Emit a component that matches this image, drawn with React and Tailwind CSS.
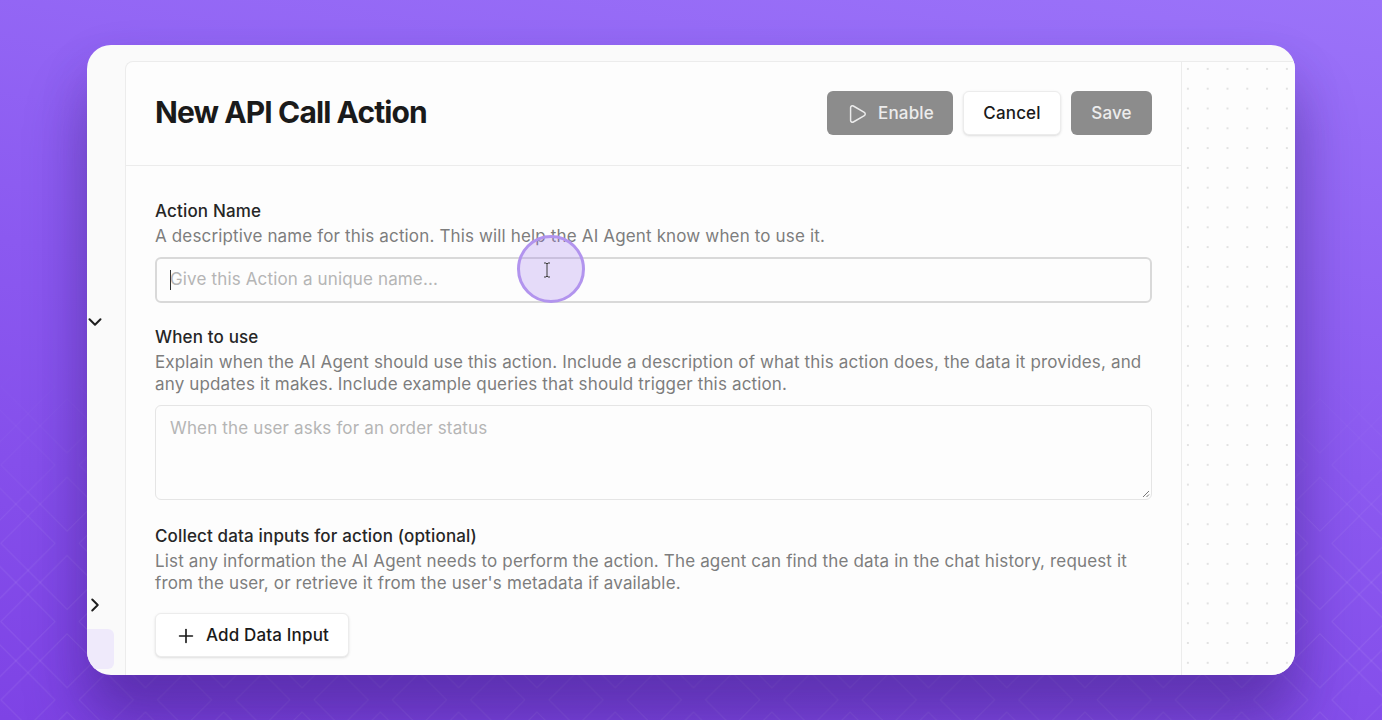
import React from 'react';
import { ChevronDown, ChevronRight, Play, Plus } from 'lucide-react';

const font = { fontFamily: 'Inter, sans-serif' };

function Pattern()
{
    return (
        <svg className="absolute inset-0 w-full h-full" xmlns="http://www.w3.org/2000/svg">
            <defs>
                <pattern id="diamonds" x="-11.15" y="425.85" width="78.3" height="78.3" patternUnits="userSpaceOnUse">
                    <g fill="none" stroke="#ffffff" strokeOpacity="0.09" strokeWidth="1">
                        <path d="M39.15 12L66.15 39.15L39.15 66.3L12 39.15Z" />
                        <path d="M0 -27L27 0L0 27L-27 0Z" />
                        <path d="M78.3 -27L105.3 0L78.3 27L51.3 0Z" />
                        <path d="M0 51.3L27 78.3L0 105.3L-27 78.3Z" />
                        <path d="M78.3 51.3L105.3 78.3L78.3 105.3L51.3 78.3Z" />
                        <path d="M39.15 -12L51.3 0L39.15 12L27 0Z" />
                        <path d="M39.15 66.3L51.3 78.3L39.15 90.3L27 78.3Z" />
                    </g>
                </pattern>
                <linearGradient id="fade" x1="0" y1="0" x2="0" y2="1">
                    <stop offset="0.48" stopColor="#fff" stopOpacity="0" />
                    <stop offset="0.8" stopColor="#fff" stopOpacity="1" />
                </linearGradient>
                <mask id="fadeMask">
                    <rect width="100%" height="100%" fill="url(#fade)" />
                </mask>
            </defs>
            <rect width="100%" height="100%" fill="url(#diamonds)" mask="url(#fadeMask)" />
        </svg>
    );
}

function Label({ title, children })
{
    return (
        <div>
            <div className="text-[17px] leading-[22px] font-medium tracking-[0.15px] text-[#262626]">{title}</div>
            <p className="mt-[3px] text-[17px] leading-[22px] tracking-[0.15px] text-[#7d7d7d]">{children}</p>
        </div>
    );
}

export default function App()
{
    return (
        <div style={font} className="relative w-[1382px] h-[720px] overflow-hidden bg-[linear-gradient(190deg,#9b73f9,#8b59f0_50%,#7e43e5)]">
            <Pattern />
            <div className="absolute left-[87px] top-[45px] w-[1208px] h-[630px] rounded-[24px] bg-[#fafafa] overflow-hidden flex shadow-[0_50px_60px_0_rgba(50,20,110,0.38),0_20px_50px_0_rgba(50,20,110,0.14)]">
                {/* sidebar strip */}
                <div className="w-[38px] shrink-0 relative">
                    <ChevronDown className="absolute left-[-3px] top-[266px] w-[22px] h-[22px] text-[#1f1f1f]" strokeWidth={2.2} />
                    <ChevronRight className="absolute left-[-3px] top-[549px] w-[22px] h-[22px] text-[#1f1f1f]" strokeWidth={2.2} />
                    <div className="absolute left-0 top-[584px] w-[27px] h-[40px] rounded-r-md bg-[#efeafb]" />
                </div>

                {/* main panel */}
                <div className="flex-1 mt-[16px] flex flex-col bg-[#fdfdfd] border-l border-t border-[#ececec] rounded-tl-lg">
                    <div className="h-[104px] shrink-0 flex items-center justify-between px-[29px] pb-[1px] border-b border-[#ececec]">
                        <h1 className="mb-[2px] text-[30px] font-bold text-[#1a1a1a] tracking-[-0.9px] leading-9">New API Call Action</h1>
                        <div className="flex items-center gap-[10px]">
                            <button className="h-[44px] w-[126px] pt-[2px] rounded-md bg-[#8c8c8c] text-[#ececec] text-[17px] tracking-[0.15px] font-medium flex items-center justify-center gap-[10px]">
                                <Play className="w-[22px] h-[22px]" strokeWidth={1.6} />
                                Enable
                            </button>
                            <button className="h-[44px] w-[98px] pt-[2px] rounded-md bg-white border border-[#ececec] shadow-sm text-[#1a1a1a] text-[17px] tracking-[0.15px] font-medium">Cancel</button>
                            <button className="h-[44px] w-[81px] pt-[2px] rounded-md bg-[#8c8c8c] text-[#ececec] text-[17px] tracking-[0.15px] font-medium">Save</button>
                        </div>
                    </div>

                    <div className="px-[29px] pt-[34px]">
                        <Label title="Action Name">A descriptive name for this action. This will help the AI Agent know when to use it.</Label>
                        <div className="relative mt-[10px] h-[46px] rounded-md border-2 border-[#d9d9d9] flex items-center pl-[13px] text-[17px] tracking-[0.15px] text-[#b5b5b5]">
                            <span className="absolute left-[13px] top-[11px] w-px h-[20px] bg-[#333]" />
                            Give this Action a unique name...
                        </div>

                        <div className="mt-[23px]">
                            <Label title="When to use">Explain when the AI Agent should use this action. Include a description of what this action does, the data it provides, and any updates it makes. Include example queries that should trigger this action.</Label>
                        </div>
                        <div className="relative mt-[10px] h-[95px] rounded-md border border-[#e5e5e5] pl-[14px] pt-[10px] text-[17px] tracking-[0.15px] leading-[24px] text-[#b5b5b5]">
                            When the user asks for an order status
                            <svg className="absolute right-[1px] bottom-[1px] w-[8px] h-[8px]" viewBox="0 0 8 8">
                                <path d="M1 7L7 1M4.5 7L7 4.5" stroke="#777" strokeWidth="1" />
                            </svg>
                        </div>

                        <div className="mt-[25px]">
                            <Label title="Collect data inputs for action (optional)">List any information the AI Agent needs to perform the action. The agent can find the data in the chat history, request it from the user, or retrieve it from the user's metadata if available.</Label>
                        </div>
                        <button className="mt-[19px] h-[44px] w-[194px] pt-[2px] rounded-md bg-white border border-[#ececec] shadow-sm text-[#1a1a1a] text-[17px] tracking-[0.15px] font-medium flex items-center justify-center gap-[9px]">
                            <Plus className="w-[22px] h-[22px]" strokeWidth={1.8} />
                            Add Data Input
                        </button>
                    </div>
                </div>

                {/* dotted canvas */}
                <div className="w-[114px] shrink-0 mt-[16px] bg-[#fdfdfd] border-l border-t border-[#ececec] bg-[radial-gradient(circle,#e2e2e2_0.9px,transparent_1.1px)] bg-[length:19.8px_19.8px] bg-[position:-4px_-3px]" />
            </div>

            {/* cursor highlight */}
            <div className="absolute left-[517px] top-[235px] w-[68px] h-[68px] rounded-full bg-[#a078f0]/25 border-[3px] border-[#b294ee] flex items-center justify-center">
                <svg className="mr-[8px] mt-[2px] w-[8px] h-[16px]" viewBox="0 0 8 16" fill="none">
                    <path d="M1 1H3L4 2L5 1H7M4 2V14M1 15H3L4 14L5 15H7" stroke="#3a3a3a" strokeWidth="1" />
                </svg>
            </div>
        </div>
    );
}
